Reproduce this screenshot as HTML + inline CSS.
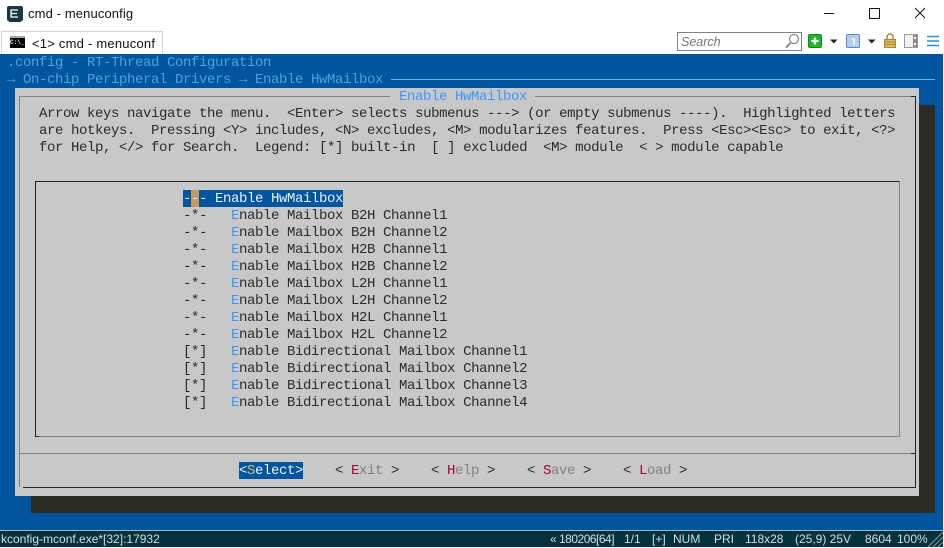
<!DOCTYPE html>
<html><head><meta charset="utf-8"><style>
html,body{margin:0;padding:0;background:#fff}
body{width:944px;height:548px;position:relative;overflow:hidden;font-family:"Liberation Sans",sans-serif}
.a{position:absolute}
.t{position:absolute;font:14px/17px "Liberation Mono",monospace;letter-spacing:-0.4px;white-space:pre;color:#2b2b2b;margin-top:1px}
.s{position:absolute;font:12px/17px "Liberation Sans",sans-serif;white-space:pre;color:#d8dcdc;top:531px}
.h{color:#3a96ff}.k{color:#a8003c}.g{color:#808080}
</style></head><body>
<svg class="a" style="left:0;top:0" width="944" height="54">
<rect x="7" y="6" width="16" height="15" rx="2" fill="#15393f"/><rect x="9" y="21" width="12" height="1" fill="#15393f"/>
<path d="M18 10H11V17H18M11 13.5H17" fill="none" stroke="#fff" stroke-width="1.3"/>
<rect x="824" y="13" width="10" height="1" fill="#111"/>
<rect x="869.5" y="8.5" width="10" height="10" fill="none" stroke="#111"/>
<path d="M915 8L925 18M925 8L915 18" stroke="#111" fill="none"/>
<rect x="1.5" y="31.5" width="161" height="23" fill="#fff" stroke="#d4d4d4"/>
<rect x="10" y="36" width="15" height="12" fill="#000"/><rect x="10" y="36" width="15" height="2" fill="#aaa"/>
<rect x="677.5" y="32.5" width="124" height="18" fill="#fff" stroke="#808080"/>
<circle cx="794" cy="39" r="4.5" fill="none" stroke="#8a8a8a" stroke-width="1.3"/><path d="M790.5 43L786 47.5" stroke="#8a8a8a" stroke-width="2"/>
<rect x="808.5" y="34.5" width="13" height="13" rx="1.5" fill="#1fb52f" stroke="#118a1c"/><path d="M815 37.500V44.500M811.500 41H818.500" stroke="#fff" stroke-width="2.200"/>
<path d="M830 39.500H837.500L833.750 43.500Z" fill="#222"/>
<rect x="846.5" y="34.5" width="13" height="13" rx="1" fill="#b5cfe8" stroke="#5b8cc0"/><path d="M853 38H855V45H853ZM851 40L853 38V40Z" fill="#e8f0f8"/>
<path d="M868 39.500H875.500L871.750 43.500Z" fill="#222"/>
<path d="M887 39V37A3 3 0 0 1 893 37V39" fill="none" stroke="#a88a3a" stroke-width="1.500"/><rect x="884.500" y="39.500" width="11" height="8" fill="#dcb860" stroke="#a88a3a"/><path d="M885 42H895M885 44.500H895" stroke="#a88a3a"/>
<rect x="904.500" y="34.500" width="13" height="13" fill="#f2f2f2" stroke="#9a9a9a"/><rect x="913" y="35" width="4" height="12" fill="#8a8a8a"/><rect x="914" y="37" width="2" height="2" fill="#fff"/><rect x="914" y="43" width="2" height="2" fill="#fff"/>
<path d="M927 36.500H939M927 41H939M927 45.500H939" stroke="#2f8fd0" stroke-width="1.600"/>
</svg>
<div class="a" style="left:28px;top:6px;font-size:13px;letter-spacing:0.12px;line-height:16px;color:#111">cmd - menuconfig</div>
<div class="a" style="left:10px;top:37.500px;width:15px;font:bold 6px/10px 'Liberation Mono',monospace;color:#fff;white-space:pre">C:\_</div>
<div class="a" style="left:32px;top:36px;font-size:13px;letter-spacing:0.22px;line-height:16px;color:#111">&lt;1&gt; cmd - menuconf</div>
<div class="a" style="left:681px;top:35px;font-size:12.500px;line-height:15px;font-style:italic;color:#777">Search</div>

<div class="a" style="left:0;top:54px;width:943px;height:476px;background:#00559e"></div>
<div class="t" style="left:7px;top:54px;color:#4ba3dd">.config - RT-Thread Configuration</div>
<div class="t" style="left:7px;top:71px;color:#4ba3dd">→ On-chip Peripheral Drivers → Enable HwMailbox</div>
<div class="a" style="left:391px;top:79px;width:544px;height:1px;background:#5ab5ea"></div>

<div class="a" style="left:31px;top:105px;width:904px;height:408px;background:#2b2b24"></div>
<div class="a" style="left:15px;top:88px;width:904px;height:408px;background:#c8c8c8"></div>

<div class="a" style="left:19px;top:96px;width:1px;height:391px;background:#808080"></div>
<div class="a" style="left:19px;top:96px;width:371px;height:1px;background:#808080"></div>
<div class="a" style="left:535px;top:96px;width:381px;height:1px;background:#808080"></div>
<div class="a" style="left:911px;top:96px;width:5px;height:1px;background:#222"></div>
<div class="a" style="left:915px;top:96px;width:1px;height:392px;background:#222"></div>
<div class="a" style="left:23px;top:487px;width:893px;height:1px;background:#222"></div>
<div class="a" style="left:20px;top:453px;width:891px;height:1px;background:#808080"></div>
<div class="a" style="left:911px;top:453px;width:4px;height:1px;background:#222"></div>
<div class="t h" style="left:399px;top:88px">Enable HwMailbox</div>

<div class="t" style="left:39px;top:105px">Arrow keys navigate the menu.  &lt;Enter&gt; selects submenus ---&gt; (or empty submenus ----).  Highlighted letters</div>
<div class="t" style="left:39px;top:122px">are hotkeys.  Pressing &lt;Y&gt; includes, &lt;N&gt; excludes, &lt;M&gt; modularizes features.  Press &lt;Esc&gt;&lt;Esc&gt; to exit, &lt;?&gt;</div>
<div class="t" style="left:39px;top:139px">for Help, &lt;/&gt; for Search.  Legend: [*] built-in  [ ] excluded  &lt;M&gt; module  &lt; &gt; module capable</div>

<div class="a" style="left:35px;top:181px;width:865px;height:1px;background:#222"></div>
<div class="a" style="left:35px;top:181px;width:1px;height:256px;background:#222"></div>
<div class="a" style="left:899px;top:181px;width:1px;height:256px;background:#808080"></div>
<div class="a" style="left:39px;top:436px;width:861px;height:1px;background:#808080"></div>
<div class="a" style="left:35px;top:436px;width:4px;height:1px;background:#222"></div>

<div class="a" style="left:183px;top:190px;width:160px;height:17px;background:#00559e"></div>
<div class="a" style="left:191px;top:190px;width:8px;height:17px;background:#c49a5e"></div>
<div class="t" style="left:183px;top:190px;color:#e8f2fa">--- Enable HwMailbox</div>
<div class="t" style="left:183px;top:207px">-*-   <span class="h">E</span>nable Mailbox B2H Channel1</div>
<div class="t" style="left:183px;top:224px">-*-   <span class="h">E</span>nable Mailbox B2H Channel2</div>
<div class="t" style="left:183px;top:241px">-*-   <span class="h">E</span>nable Mailbox H2B Channel1</div>
<div class="t" style="left:183px;top:258px">-*-   <span class="h">E</span>nable Mailbox H2B Channel2</div>
<div class="t" style="left:183px;top:275px">-*-   <span class="h">E</span>nable Mailbox L2H Channel1</div>
<div class="t" style="left:183px;top:292px">-*-   <span class="h">E</span>nable Mailbox L2H Channel2</div>
<div class="t" style="left:183px;top:309px">-*-   <span class="h">E</span>nable Mailbox H2L Channel1</div>
<div class="t" style="left:183px;top:326px">-*-   <span class="h">E</span>nable Mailbox H2L Channel2</div>
<div class="t" style="left:183px;top:343px">[*]   <span class="h">E</span>nable Bidirectional Mailbox Channel1</div>
<div class="t" style="left:183px;top:360px">[*]   <span class="h">E</span>nable Bidirectional Mailbox Channel2</div>
<div class="t" style="left:183px;top:377px">[*]   <span class="h">E</span>nable Bidirectional Mailbox Channel3</div>
<div class="t" style="left:183px;top:394px">[*]   <span class="h">E</span>nable Bidirectional Mailbox Channel4</div>

<div class="a" style="left:239px;top:462px;width:64px;height:17px;background:#00559e"></div>
<div class="t" style="left:239px;top:462px;color:#e8f2fa">&lt;<span style="color:#d0c060">S</span>elect&gt;</div>
<div class="t" style="left:335px;top:462px">&lt; <span class="k">E</span><span class="g">xit</span> &gt;</div>
<div class="t" style="left:431px;top:462px">&lt; <span class="k">H</span><span class="g">elp</span> &gt;</div>
<div class="t" style="left:527px;top:462px">&lt; <span class="k">S</span><span class="g">ave</span> &gt;</div>
<div class="t" style="left:623px;top:462px">&lt; <span class="k">L</span><span class="g">oad</span> &gt;</div>

<div class="a" style="left:0;top:530px;width:943px;height:17px;background:#04323f"></div>
<div class="a" style="left:0;top:530px;width:943px;height:1px;background:#a8b4b8"></div>
<div class="s" style="left:1px">kconfig-mconf.exe*[32]:17932</div>
<div class="s" style="left:550px;letter-spacing:-0.5px">« 180206[64]</div>
<div class="s" style="left:624px">1/1</div>
<div class="s" style="left:652px">[+]</div>
<div class="s" style="left:673px">NUM</div>
<div class="s" style="left:714px">PRI</div>
<div class="s" style="left:745px">118x28</div>
<div class="s" style="left:795px">(25,9) 25V</div>
<div class="s" style="left:865px">8604</div>
<div class="s" style="left:897px">100%</div>
<svg class="a" style="left:928px;top:531px" width="15" height="16"><path d="M0 16L15 1M5 16L15 6M10 16L15 11" stroke="#8a9a9e" fill="none"/></svg>
</body></html>
